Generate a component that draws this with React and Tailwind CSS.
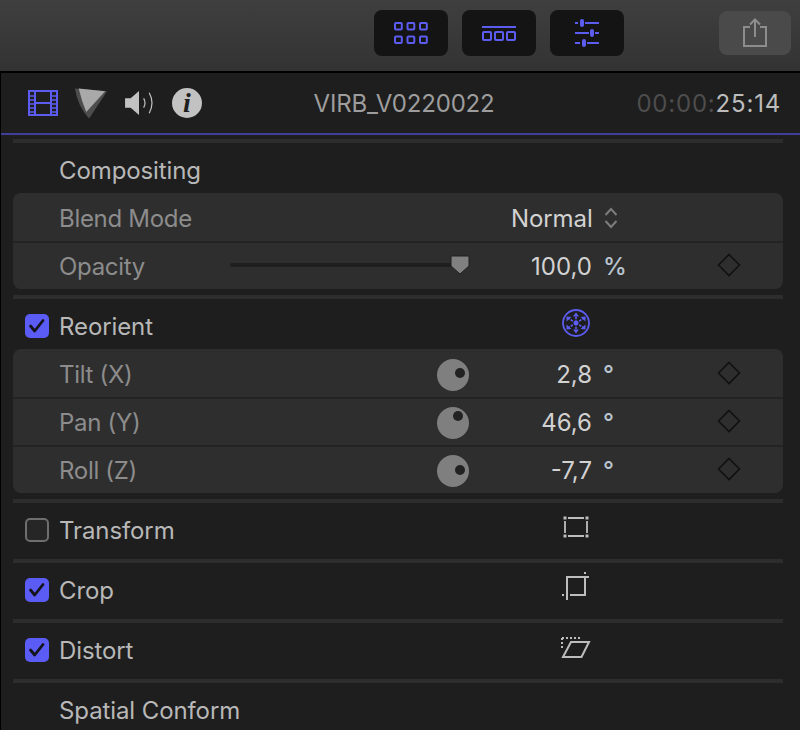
const BLUE = "#5c5cf0";

const Sep = () => <div className="h-1 mx-3 w-[770px] bg-[#2d2d2d] shrink-0" />;

const Check = ({ on }) =>
  on ? (
    <div className="w-6 h-6 rounded-[5px] bg-[#5b5bf5] shrink-0">
      <svg width="24" height="24" viewBox="0 0 24 24" fill="none">
        <path d="M5.5 12 L9.7 17 L18 6.5" stroke="#14141c" strokeWidth="2.8" strokeLinecap="round" strokeLinejoin="round" />
      </svg>
    </div>
  ) : (
    <div className="w-6 h-6 rounded-[5px] border-2 border-[#6e6e6e] bg-[#262626] shrink-0" />
  );

const Diamond = () => (
  <svg width="24" height="24" viewBox="0 0 24 24" fill="none" className="shrink-0 -mt-0.5">
    <path d="M12 1.5 L22.5 12 L12 22.5 L1.5 12 Z" stroke="#111111" strokeWidth="1.6" />
  </svg>
);

const Knob = ({ dotX, dotY }) => (
  <svg width="32" height="32" viewBox="0 0 32 32" className="shrink-0 mt-0.5">
    <circle cx="16" cy="16" r="16" fill="#7f7f7f" />
    <circle cx={dotX} cy={dotY} r="5" fill="#222222" />
  </svg>
);

const Unit = ({ children }) => (
  <span className="w-[30px] pl-[11px] pt-0.5 text-[#b9c4cf] font-medium">{children}</span>
);

const ParamRow = ({ label, value, unit, dot, first }) => (
  <div className={`h-12 flex items-center border-t-2 ${first ? "border-transparent" : "border-[#232323]"}`}>
    <div className="w-[424px] pl-[46px] pt-0.5 text-[#8c8c8c] tracking-[-0.3px]">{label}</div>
    <Knob dotX={dot[0]} dotY={dot[1]} />
    <div className="w-[123px] pt-0.5 text-right text-[#d2d2d2]">{value}</div>
    <Unit>{unit}</Unit>
    <div className="ml-[95px] flex">
      <Diamond />
    </div>
  </div>
);

const SectionRow = ({ check, label, icon, h = "h-14", labelCls = "", checkCls = "-mt-0.5", iconCls = "-mt-2" }) => (
  <div className={`${h} flex items-center pl-6 shrink-0`}>
    <div className={`w-[34px] ${checkCls}`}>{check !== undefined && <Check on={check} />}</div>
    <div className={`w-[501px] text-[#b8b8b8] tracking-[-0.1px] ${labelCls}`}>{label}</div>
    <div className={`w-8 flex justify-center ${iconCls}`}>{icon}</div>
  </div>
);

const ToolBtn = ({ children }) => (
  <div className="w-[74px] h-[46px] rounded-lg bg-[#141414] flex items-center justify-center">{children}</div>
);

const GridIcon = () => (
  <svg width="34" height="22" viewBox="0 0 34 22" fill="none" stroke={BLUE} strokeWidth="2">
    {[1, 13.5, 26].map((x) =>
      [1, 14.5].map((y) => <rect key={`${x}-${y}`} x={x} y={y} width="6.8" height="6.5" rx="1" />)
    )}
  </svg>
);

const TimelineIcon = () => (
  <svg width="34" height="15" viewBox="0 0 34 15" fill="none" stroke={BLUE} strokeWidth="2">
    <path d="M0 1 H34" />
    <rect x="1" y="6" width="8" height="8" rx="1" />
    <rect x="13" y="6" width="8" height="8" rx="1" />
    <rect x="25" y="6" width="8" height="8" rx="1" />
  </svg>
);

const SlidersIcon = () => (
  <svg width="24" height="28" viewBox="0 0 24 28" fill="none">
    <path d="M0 4 H3 M10 4 H24 M0 14 H14 M20 14 H24 M0 24 H5 M12 24 H24" stroke={BLUE} strokeWidth="2" />
    <rect x="5" y="0" width="4" height="8" rx="2" fill={BLUE} />
    <rect x="15" y="10" width="4" height="8" rx="2" fill={BLUE} />
    <rect x="7" y="20" width="4" height="8" rx="2" fill={BLUE} />
  </svg>
);

const ShareIcon = () => (
  <svg width="24" height="30" viewBox="0 0 24 30" fill="none" stroke="#8d8d8d" strokeWidth="2">
    <path d="M7 9 H1 V28 H23 V9 H17" />
    <path d="M12 19 V2 M7 6.5 L12 1.5 L17 6.5" />
  </svg>
);

const FilmIcon = () => (
  <svg width="30" height="26" viewBox="0 0 30 26" fill="none" className="shrink-0">
    <rect x="1" y="1" width="28" height="24" stroke={BLUE} strokeWidth="2" />
    <path d="M7 1 V25 M23 1 V25 M7 13 H23" stroke={BLUE} strokeWidth="2" />
    <path d="M1.5 6 H6.5 M1.5 10 H6.5 M1.5 14 H6.5 M1.5 18 H6.5 M1.5 22 H6.5 M23.5 6 H28.5 M23.5 10 H28.5 M23.5 14 H28.5 M23.5 18 H28.5 M23.5 22 H28.5" stroke={BLUE} strokeWidth="1.6" />
  </svg>
);

const ColorIcon = () => (
  <svg width="34" height="33" viewBox="0 0 36 34" className="shrink-0 ml-4">
    <path d="M1 1 L35 4 L16 33 Q4 20 1 1 Z" fill="#4d4d4d" />
    <path d="M5 1 L33 4 L13 26 Q8 14 5 1 Z" fill="#a9a9a9" />
  </svg>
);

const AudioIcon = () => (
  <svg width="30" height="26" viewBox="0 0 30 28" fill="none" className="shrink-0 ml-4">
    <path d="M0 9 H6 L15 1 V27 L6 19 H0 Z" fill="#c2c2c2" />
    <path d="M20 9 Q23 14 20 19" stroke="#c2c2c2" strokeWidth="1.3" />
    <path d="M26 3 Q32 14 26 25" stroke="#c2c2c2" strokeWidth="1.3" />
  </svg>
);

const InfoIcon = () => (
  <div className="ml-[18px] w-[30px] h-[30px] shrink-0 rounded-full bg-[#c2c2c2] flex items-center justify-center text-[#1e1e1e] text-[28px] font-bold italic leading-none font-['Liberation_Serif',serif]">
    i
  </div>
);

const ReorientIcon = () => (
  <svg width="28" height="28" viewBox="0 0 28 28" fill="none" stroke={BLUE}>
    <circle cx="14" cy="14" r="13" strokeWidth="1.8" />
    <path d="M14 14 V5 M14 14 V23 M14 14 L6.5 9.5 M14 14 L21.5 9.5 M14 14 L6.5 18.5 M14 14 L21.5 18.5" strokeWidth="1.6" strokeDasharray="2.5 1.2" />
    <path d="M11 7.5 L14 3.5 L17 7.5 Z M11 20.5 L14 24.5 L17 20.5 Z M4.5 12.5 L4.5 7.5 L9.5 8 Z M23.5 12.5 L23.5 7.5 L18.5 8 Z M4.5 15.5 L4.5 20.5 L9.5 20 Z M23.5 15.5 L23.5 20.5 L18.5 20 Z" fill={BLUE} stroke="none" />
    <circle cx="14" cy="14" r="2.4" fill={BLUE} stroke="none" />
  </svg>
);

const TransformIcon = () => (
  <svg width="26" height="22" viewBox="0 0 26 22" fill="none" stroke="#bdbdbd" strokeWidth="1.8">
    <path d="M5 2 H21 M5 20 H21 M2 5 V17 M24 5 V17" />
    <g fill="#bdbdbd" stroke="none">
      <rect x="0.5" y="0.5" width="3" height="3" />
      <rect x="22.5" y="0.5" width="3" height="3" />
      <rect x="0.5" y="18.5" width="3" height="3" />
      <rect x="22.5" y="18.5" width="3" height="3" />
    </g>
  </svg>
);

const CropIcon = () => (
  <svg width="28" height="28" viewBox="0 0 28 28" fill="none" stroke="#bdbdbd" strokeWidth="2">
    <path d="M5 28 V5 H27 M23 5 V23 H8" />
    <g fill="#bdbdbd" stroke="none">
      <rect x="22" y="0" width="2" height="2" />
      <rect x="0" y="22" width="2" height="2" />
    </g>
  </svg>
);

const DistortIcon = () => (
  <svg width="30" height="21" viewBox="0 0 30 21" fill="none">
    <path d="M2 20 L10 5 H28 L20.5 20 Z" stroke="#bdbdbd" strokeWidth="2" />
    <path d="M1 1 H19 M1 1 V13" stroke="#bdbdbd" strokeWidth="2" strokeDasharray="2 2" />
  </svg>
);

export default function App() {
  return (
    <div className="w-[800px] h-[730px] overflow-hidden bg-[#1e1e1e] font-['Inter',sans-serif] text-[24px] leading-none flex flex-col">
      {/* toolbar */}
      <div className="h-[71px] shrink-0 bg-gradient-to-b from-[#3f3f3f] to-[#333333] flex items-center pl-[374px] pb-[5px]">
        <div className="flex gap-[14px]">
          <ToolBtn><GridIcon /></ToolBtn>
          <ToolBtn><TimelineIcon /></ToolBtn>
          <ToolBtn><SlidersIcon /></ToolBtn>
        </div>
        <div className="ml-[95px] w-[72px] h-[44px] rounded-lg bg-[#4a4a4a] flex items-center justify-center">
          <ShareIcon />
        </div>
      </div>
      <div className="h-0.5 bg-black shrink-0" />

      <div className="flex-1 min-h-0 border-l border-black flex flex-col">
        {/* inspector header */}
        <div className="h-[62px] shrink-0 flex items-center border-b-2 border-[#3f3f9a]">
          <div className="flex items-center pl-[27px] w-[300px]">
            <FilmIcon />
            <ColorIcon />
            <AudioIcon />
            <InfoIcon />
          </div>
          <div className="w-[206px] pt-0.5 text-center text-[#9d9d9d] whitespace-nowrap tracking-[-0.2px]">VIRB_V0220022</div>
          <div className="ml-auto pr-[19px] pt-0.5 tracking-[0.8px]">
            <span className="text-[#4d4d4d]">00:00:</span>
            <span className="text-[#bcbcbc]">25:14</span>
          </div>
        </div>

        <div className="h-1 shrink-0" />
        <Sep />
        <SectionRow label="Compositing" h="h-[50px]" labelCls="pt-1.5" />
        <div className="mx-3 w-[770px] rounded-lg bg-[#2e2e2e] overflow-hidden shrink-0">
          <div className="h-12 flex items-center">
            <div className="w-[498px] pl-[46px] pt-1 text-[#8c8c8c] tracking-[-0.3px]">Blend Mode</div>
            <div className="pt-1 text-[#d2d2d2] tracking-[-0.1px]">Normal</div>
            <svg width="14" height="22" viewBox="0 0 14 22" fill="none" stroke="#7d7d7d" strokeWidth="2" className="ml-[11px] mt-0.5">
              <path d="M1.5 8 L7 2 L12.5 8 M1.5 14 L7 20 L12.5 14" />
            </svg>
          </div>
          <div className="h-12 flex items-center border-t-2 border-[#232323]">
            <div className="w-[217px] pl-[46px] pt-0.5 text-[#8c8c8c] tracking-[-0.3px]">Opacity</div>
            <div className="w-[222px] h-1 rounded-full bg-[#1f1f1f] -mt-0.5" />
            <svg width="20" height="20" viewBox="0 0 20 20" className="-ml-[2px] -mt-0.5 shrink-0">
              <path d="M2 1 H18 Q19 1 19 2 V11 L10 19 L1 11 V2 Q1 1 2 1 Z" fill="#808080" stroke="#1f1f1f" strokeWidth="1" />
            </svg>
            <div className="w-[122px] pt-0.5 text-right text-[#d2d2d2]">100,0</div>
            <Unit>%</Unit>
            <div className="ml-[95px] flex">
              <Diamond />
            </div>
          </div>
        </div>

        <div className="h-1.5 shrink-0" />
        <Sep />
        <SectionRow check={true} label="Reorient" icon={<ReorientIcon />} h="h-[50px]" labelCls="pt-1.5" checkCls="mt-1" iconCls="-mt-0.5" />
        <div className="mx-3 w-[770px] rounded-lg bg-[#2e2e2e] overflow-hidden shrink-0">
          <ParamRow label="Tilt (X)" value="2,8" unit="°" dot={[23, 14]} first />
          <ParamRow label="Pan (Y)" value="46,6" unit="°" dot={[21, 9]} />
          <ParamRow label="Roll (Z)" value="-7,7" unit="°" dot={[23, 15]} />
        </div>

        <div className="h-1.5 shrink-0" />
        <Sep />
        <SectionRow check={false} label="Transform" icon={<TransformIcon />} />
        <Sep />
        <SectionRow check={true} label="Crop" icon={<CropIcon />} iconCls="-mt-2.5" />
        <Sep />
        <SectionRow check={true} label="Distort" icon={<DistortIcon />} iconCls="-mt-2" />
        <Sep />
        <SectionRow label="Spatial Conform" />
      </div>
    </div>
  );
}
